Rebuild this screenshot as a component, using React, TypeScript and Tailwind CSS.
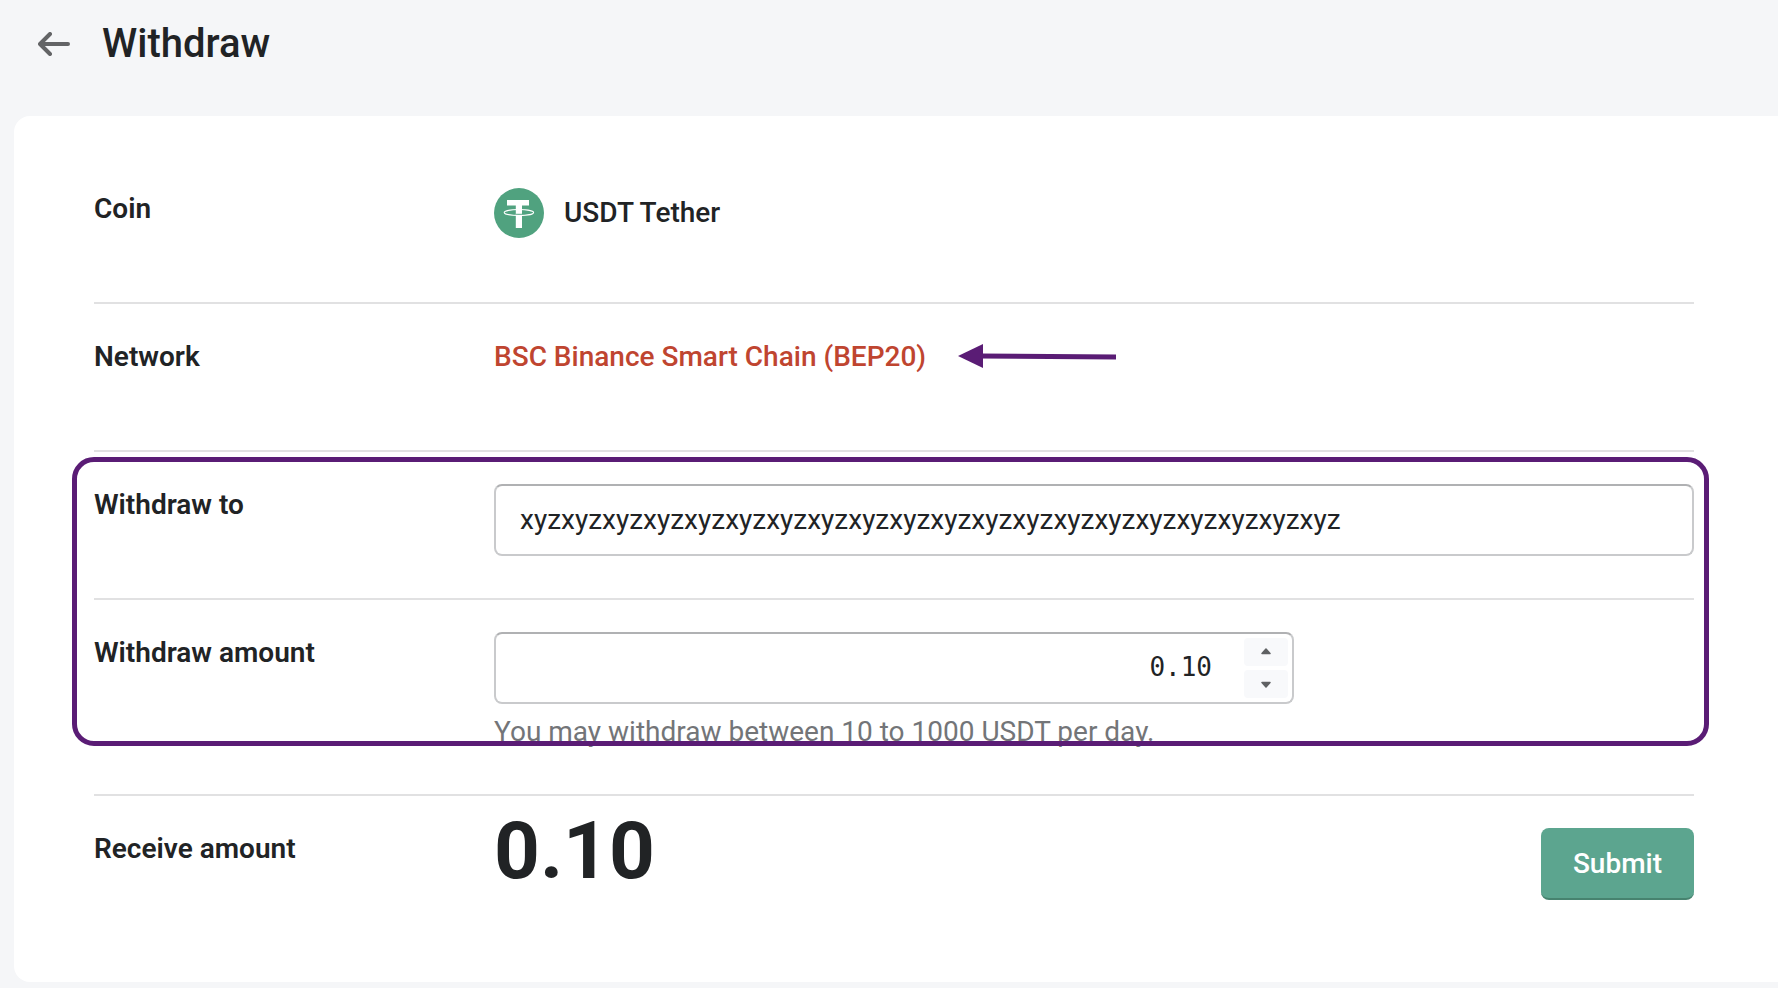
import { useState, type ReactNode } from "react";

function BackIcon() {
  return (
    <svg width="32" height="24" viewBox="0 0 32 24" fill="none" aria-hidden="true">
      <path
        d="M12 2 2 12l10 10M2.5 12H30"
        stroke="#636466"
        strokeWidth="4"
        strokeLinecap="round"
        strokeLinejoin="round"
      />
    </svg>
  );
}

function TetherIcon() {
  return (
    <svg width="50" height="50" viewBox="0 0 50 50" aria-hidden="true">
      <circle cx="25" cy="25" r="25" fill="#50a27f" />
      <path d="M13 12h22v5.500h-7v22.500h-6.200V17.500H13z" fill="#fff" />
      <path d="M21.800 26.300h6.200" stroke="#50a27f" strokeWidth="1" />
      <ellipse cx="24.900" cy="24.500" rx="14.700" ry="3" fill="none" stroke="#fff" strokeWidth="1.100" />
    </svg>
  );
}

function Pointer() {
  return (
    <svg className="shrink-0" width="158" height="26" viewBox="0 0 158 26" aria-hidden="true">
      <path d="M0 12 25 0v24z" fill="#5a1c75" />
      <path d="M22 12 158 13" stroke="#5a1c75" strokeWidth="5" />
    </svg>
  );
}

type RowProps = {
  label: string;
  htmlFor?: string;
  last?: boolean;
  children: ReactNode;
};

function Row({ label, htmlFor, last, children }: RowProps) {
  const labelClass = "w-[400px] shrink-0 leading-[42px] font-semibold";
  return (
    <div
      className={
        last
          ? "flex pt-8"
          : "flex min-h-[148px] border-b-2 border-[#e1e1e2] pt-8 pb-[42px]"
      }
    >
      {htmlFor ? (
        <label htmlFor={htmlFor} className={labelClass}>
          {label}
        </label>
      ) : (
        <div className={labelClass}>{label}</div>
      )}
      <div className="min-w-0 flex-1">{children}</div>
    </div>
  );
}

export default function App() {
  const [address, setAddress] = useState("xyz".repeat(20));
  const [amount, setAmount] = useState("0.10");

  const step = (delta: number) =>
    setAmount((value) => Math.max(0, Number(value) + delta).toFixed(2));

  return (
    <div className="min-h-screen overflow-x-hidden bg-[#f5f6f8] pb-1.5 pl-3.5 font-['Roboto',sans-serif] text-[28px] leading-10 text-[#212325]">
      {/* Header */}
      <header className="flex h-[116px] items-start gap-8 pt-5 pl-6">
        <button type="button" aria-label="Back" className="flex h-12 items-center">
          <BackIcon />
        </button>
        <h1 className="text-[40px] leading-12 font-medium">Withdraw</h1>
      </header>

      <form
        onSubmit={(e) => e.preventDefault()}
        className="rounded-l-2xl bg-white pt-10 pr-[84px] pb-[82px] pl-20"
      >
        <Row label="Coin">
          <div className="flex items-center gap-5 font-medium">
            <TetherIcon />
            USDT Tether
          </div>
        </Row>

        <Row label="Network">
          <div className="flex items-center gap-8 leading-[42px] font-medium text-[#bf4530]">
            BSC Binance Smart Chain (BEP20)
            <Pointer />
          </div>
        </Row>

        {/* Highlighted fields */}
        <div className="relative">
          <Row label="Withdraw to" htmlFor="address">
            <input
              id="address"
              type="text"
              value={address}
              onChange={(e) => setAddress(e.target.value)}
              className="block h-[72px] w-full rounded-lg border-2 border-[#c9cacc] border-t-[#b0b1b3] bg-white px-6 pb-0.5 outline-none"
            />
          </Row>

          <Row label="Withdraw amount" htmlFor="amount">
            <div className="flex h-[72px] w-full max-w-[800px] rounded-lg border-2 border-[#c9cacc] border-t-[#b0b1b3] bg-white">
              <input
                id="amount"
                type="text"
                inputMode="decimal"
                value={amount}
                onChange={(e) => setAmount(e.target.value)}
                className="min-w-0 flex-1 pr-8 pb-0.5 pl-6 text-right font-['DejaVu_Sans_Mono',monospace] text-[26px] outline-none"
              />
              <div className="flex w-12 flex-col gap-1 py-1 pr-1">
                <button
                  type="button"
                  aria-label="Increase amount"
                  onClick={() => step(0.01)}
                  className="flex flex-1 items-center justify-center rounded bg-[#f8f9fb]"
                >
                  <svg width="10" height="8" viewBox="0 0 10 8" aria-hidden="true">
                    <path d="M5 1 9 5.500H1z" fill="#5f6163" stroke="#5f6163" strokeWidth="1.500" strokeLinejoin="round" />
                  </svg>
                </button>
                <button
                  type="button"
                  aria-label="Decrease amount"
                  onClick={() => step(-0.01)}
                  className="flex flex-1 items-center justify-center rounded bg-[#f8f9fb]"
                >
                  <svg width="10" height="8" viewBox="0 0 10 8" aria-hidden="true">
                    <path d="M5 7 1 2.500h8z" fill="#5f6163" stroke="#5f6163" strokeWidth="1.500" strokeLinejoin="round" />
                  </svg>
                </button>
              </div>
            </div>
            <p className="mt-2 text-[#737578]">You may withdraw between 10 to 1000 USDT per day.</p>
          </Row>

          <div className="pointer-events-none absolute top-[5px] -right-[15px] bottom-[50px] -left-[22px] rounded-[22px] border-5 border-[#5a1c75]" />
        </div>

        <Row label="Receive amount" last>
          <div className="flex items-start justify-between">
            <output htmlFor="amount" className="text-[80px] leading-[46px] font-bold">
              {amount}
            </output>
            <button
              type="submit"
              className="h-[72px] rounded-lg border-b-2 border-[#47836f] bg-[#5ca58f] px-8 pt-0.5 font-medium text-white"
            >
              Submit
            </button>
          </div>
        </Row>
      </form>
    </div>
  );
}
